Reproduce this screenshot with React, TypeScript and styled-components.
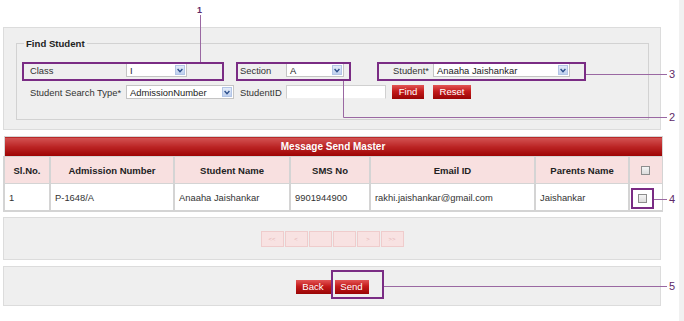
import React from 'react';
import styled, { createGlobalStyle } from 'styled-components';

const GlobalStyle = createGlobalStyle`
  body {
    margin: 0;
    background: #ffffff;
    font-family: 'Liberation Sans', Arial, sans-serif;
    font-size: 9.4px;
    color: #333333;
  }
`;

const Page = styled.div`
  position: relative;
  display: flex;
  width: 684px;
  min-height: 321px;
  overflow: hidden;
`;
const Main = styled.div`
  width: 679px;
  padding: 27px 0 0 3px;
  box-sizing: border-box;
`;
const ScrollStrip = styled.div`
  flex: 1;
  background: #f1f1f1;
`;

const Panel = styled.div<{ $h?: number }>`
  width: 658px;
  box-sizing: border-box;
  background: #efefef;
  border: 1px solid #dcdcdc;
  ${({ $h }) => ($h ? `height: ${$h}px;` : '')}
`;
const SearchPanel = styled(Panel)`
  padding: 10px 0 9px 12px;
`;
const CenterPanel = styled(Panel)`
  display: flex;
  align-items: center;
  justify-content: center;
  margin-top: 5px;
`;

const Fieldset = styled.fieldset`
  margin: 0;
  width: 633px;
  box-sizing: border-box;
  border: 1px solid #d2d2d2;
  padding: 10px 0 16px 13px;
  min-width: 0;
`;
const Legend = styled.legend`
  margin-left: -6px;
  padding: 0 2px;
  font-weight: bold;
  font-size: 9.6px;
  color: #222;
`;
const Row = styled.div`
  display: flex;
  align-items: center;
  height: 22px;
`;
const Cell = styled.div<{ $w: number; $right?: boolean }>`
  width: ${({ $w }) => $w}px;
  flex: none;
  display: flex;
  align-items: center;
  justify-content: ${({ $right }) => ($right ? 'flex-end' : 'flex-start')};
  gap: 9px;
  padding-right: ${({ $right }) => ($right ? 4 : 0)}px;
  box-sizing: border-box;
`;
const Label = styled.span`
  color: #333;
  white-space: nowrap;
`;

const SelectBox = styled.div<{ $w: number }>`
  width: ${({ $w }) => $w}px;
  height: 14px;
  box-sizing: border-box;
  background: #fff;
  border: 1px solid #c4c4c4;
  display: flex;
  align-items: center;
  justify-content: space-between;
  padding: 0 1px 0 3px;
  color: #222;
`;
const Arrow = styled.span`
  width: 10px;
  height: 10px;
  box-sizing: border-box;
  background: linear-gradient(#e4ecf9, #bfd0ee);
  border: 1px solid #b3c5e6;
  display: flex;
  align-items: center;
  justify-content: center;
`;
const TextInput = styled.div`
  width: 100px;
  height: 14px;
  box-sizing: border-box;
  background: #fff;
  border: 1px solid #d0d0d0;
  border-bottom-color: #f0f0f0;
`;
const RedButton = styled.button<{ $w: number }>`
  width: ${({ $w }) => $w}px;
  height: 14px;
  padding: 0;
  border: none;
  background: linear-gradient(#e25555 0%, #c41b1b 45%, #990505 100%);
  color: #fff;
  font-family: 'Liberation Sans', Arial, sans-serif;
  font-size: 9.6px;
  line-height: 14px;
  cursor: pointer;
`;

const Table = styled.table`
  width: 658px;
  margin-top: 6px;
  border-collapse: collapse;
  table-layout: fixed;
  border: 1px solid #d6d6d6;
`;
const TitleCell = styled.th`
  height: 19px;
  padding: 0;
  background: linear-gradient(#d45454 0%, #bb2424 50%, #9c0202 100%);
  color: #fff;
  font-size: 10px;
  font-weight: bold;
  text-align: center;
`;
const HeadCell = styled.th`
  height: 26px;
  padding: 0;
  background: #f8e0e0;
  border: 1px solid #d4d4d4;
  border-left-width: 2px;
  font-size: 9.5px;
  font-weight: bold;
  color: #222;
  text-align: center;
`;
const DataCell = styled.td<{ $pl?: number }>`
  height: 26px;
  padding: 0 0 0 ${({ $pl }) => $pl ?? 4}px;
  background: #fff;
  border: 1px solid #d4d4d4;
  border-left-width: 2px;
  border-bottom-width: 2px;
  color: #333;
  white-space: nowrap;
`;
const CheckBox = styled.span`
  display: inline-block;
  width: 9px;
  height: 9px;
  box-sizing: border-box;
  border: 1px solid #8d8d8d;
  background: linear-gradient(#f4f4f4, #dcdcdc);
  vertical-align: middle;
`;

const Pager = styled.div`
  display: flex;
  gap: 1px;
`;
const PageBtn = styled.span`
  width: 23px;
  height: 16px;
  box-sizing: border-box;
  background: #f8e2e2;
  border: 1px solid #efcccc;
  color: #e6b4b4;
  font-size: 6px;
  display: flex;
  align-items: center;
  justify-content: center;
`;
const ButtonRow = styled.div`
  display: flex;
  gap: 4px;
  margin-top: 1px;
`;

const Overlay = styled.svg`
  position: absolute;
  left: 0;
  top: 0;
  pointer-events: none;
`;

const Chevron = () => (
  <svg width="6" height="5" viewBox="0 0 6 5">
    <path d="M0.6 1 L3 3.6 L5.4 1" fill="none" stroke="#2c4f8c" strokeWidth="1.4" />
  </svg>
);

const Select = ({ w, value }: { w: number; value: string }) => (
  <SelectBox $w={w}>
    <span>{value}</span>
    <Arrow>
      <Chevron />
    </Arrow>
  </SelectBox>
);

const columns = [46, 124, 116, 80, 165, 94, 33];
const pages = ['<<', '<', '', '', '>', '>>'];

const Callouts = () => {
  const box = '#7a2c84';
  const line = '#9a68a2';
  return (
    <Overlay width="684" height="321">
      <g fill="none" stroke={box} strokeWidth="2">
        <rect x="23" y="63" width="200" height="17" />
        <rect x="237" y="63" width="113" height="17" />
        <rect x="378" y="63" width="207" height="17" />
        <rect x="632" y="189" width="21" height="19" />
        <rect x="332" y="271" width="51" height="27" />
      </g>
      <g fill="none" stroke={line} strokeWidth="1">
        <path d="M200.5 15 V62" />
        <path d="M343.5 81 V117.5 H667" />
        <path d="M586 74.5 H667" />
        <path d="M654 199.5 H667" />
        <path d="M384 286.5 H667" />
      </g>
      <g fill="#5e2a68" fontFamily="'Liberation Sans', Arial, sans-serif" fontSize="11">
        <text x="197" y="13" fontSize="9" fontWeight="bold">1</text>
        <text x="669" y="121">2</text>
        <text x="669" y="78">3</text>
        <text x="669" y="203">4</text>
        <text x="669" y="290">5</text>
      </g>
    </Overlay>
  );
};

const App = () => {
  return (
    <Page>
      <GlobalStyle />
      <Main>
        <SearchPanel>
          <Fieldset>
            <Legend>Find Student</Legend>
            <Row>
              <Cell $w={96}>
                <Label>Class</Label>
              </Cell>
              <Cell $w={114}>
                <Select w={61} value="I" />
              </Cell>
              <Cell $w={46}>
                <Label>Section</Label>
              </Cell>
              <Cell $w={106}>
                <Select w={58} value="A" />
              </Cell>
              <Cell $w={41} $right>
                <Label>Student*</Label>
              </Cell>
              <Cell $w={140}>
                <Select w={137} value="Anaaha Jaishankar" />
              </Cell>
            </Row>
            <Row>
              <Cell $w={96}>
                <Label>Student Search Type*</Label>
              </Cell>
              <Cell $w={114}>
                <Select w={108} value="AdmissionNumber" />
              </Cell>
              <Cell $w={46}>
                <Label>StudentID</Label>
              </Cell>
              <Cell $w={106}>
                <TextInput />
              </Cell>
              <Cell $w={90}>
                <RedButton $w={32}>Find</RedButton>
                <RedButton $w={38}>Reset</RedButton>
              </Cell>
            </Row>
          </Fieldset>
        </SearchPanel>

        <Table>
          <colgroup>
            {columns.map((w, i) => (
              <col key={i} style={{ width: w }} />
            ))}
          </colgroup>
          <thead>
            <tr>
              <TitleCell colSpan={7}>Message Send Master</TitleCell>
            </tr>
            <tr>
              <HeadCell>Sl.No.</HeadCell>
              <HeadCell>Admission Number</HeadCell>
              <HeadCell>Student Name</HeadCell>
              <HeadCell>SMS No</HeadCell>
              <HeadCell>Email ID</HeadCell>
              <HeadCell>Parents Name</HeadCell>
              <HeadCell>
                <CheckBox />
              </HeadCell>
            </tr>
          </thead>
          <tbody>
            <tr>
              <DataCell>1</DataCell>
              <DataCell>P-1648/A</DataCell>
              <DataCell>Anaaha Jaishankar</DataCell>
              <DataCell>9901944900</DataCell>
              <DataCell>rakhi.jaishankar@gmail.com</DataCell>
              <DataCell>Jaishankar</DataCell>
              <DataCell $pl={8}>
                <CheckBox />
              </DataCell>
            </tr>
          </tbody>
        </Table>

        <CenterPanel $h={43}>
          <Pager>
            {pages.map((p, i) => (
              <PageBtn key={i}>{p}</PageBtn>
            ))}
          </Pager>
        </CenterPanel>

        <CenterPanel $h={40} style={{ marginTop: 6 }}>
          <ButtonRow>
            <RedButton $w={35}>Back</RedButton>
            <RedButton $w={34}>Send</RedButton>
          </ButtonRow>
        </CenterPanel>
      </Main>
      <ScrollStrip />
      <Callouts />
    </Page>
  );
};

export default App;
